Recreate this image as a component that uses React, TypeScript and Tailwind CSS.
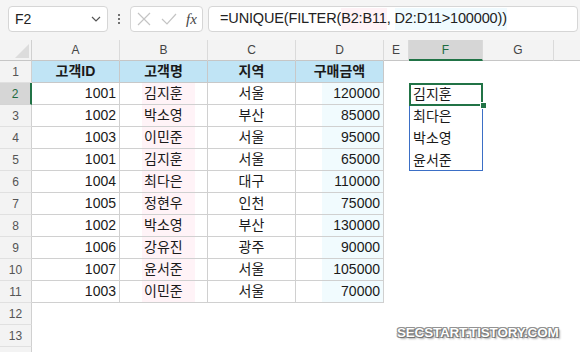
import React from 'react';

const font = { fontFamily: '"Liberation Sans", "Noto Sans CJK KR", sans-serif' };

const rows: Array<[string, string, string, string]> = [
  ['1001', '김지훈', '서울', '120000'],
  ['1002', '박소영', '부산', '85000'],
  ['1003', '이민준', '서울', '95000'],
  ['1001', '김지훈', '서울', '65000'],
  ['1004', '최다은', '대구', '110000'],
  ['1005', '정현우', '인천', '75000'],
  ['1002', '박소영', '부산', '130000'],
  ['1006', '강유진', '광주', '90000'],
  ['1007', '윤서준', '서울', '105000'],
  ['1003', '이민준', '서울', '70000'],
];

const spill = ['김지훈', '최다은', '박소영', '윤서준'];

function RowHeader({ n, selected }: { n: number; selected?: boolean }) {
  return (
    <div
      className={
        selected
          ? 'w-[32px] h-full flex items-center justify-center text-[12px] text-[#1e6b3f] bg-[#d6d6d6] border-r-2 border-r-[#217346] border-b border-b-[#d4d4d4]'
          : 'w-[32px] h-full flex items-center justify-center text-[12px] text-[#555] bg-[#f3f3f3] border-r border-r-[#d0d0d0] border-b border-b-[#e0e0e0]'
      }
    >
      {n}
    </div>
  );
}

function XIcon() {
  return (
    <svg width="14" height="14" viewBox="0 0 14 14" fill="none" stroke="#c4c4c4" strokeWidth="1.2">
      <path d="M1 1 L13 13 M13 1 L1 13" />
    </svg>
  );
}

function CheckIcon() {
  return (
    <svg width="16" height="14" viewBox="0 0 16 14" fill="none" stroke="#c4c4c4" strokeWidth="1.2">
      <path d="M1 7 L6 12 L15 2" />
    </svg>
  );
}

export default function App() {
  return (
    <div className="w-[580px] h-[352px] bg-white relative overflow-hidden text-[#1a1a1a]" style={font}>
      {/* formula bar */}
      <div className="h-[40px] bg-[#f5f5f5] flex items-start pt-[6px] pl-[8px]">
        <div className="w-[100px] h-[26px] bg-white border border-[#d6d6d6] rounded-[4px] flex items-center justify-between pl-[6px] pr-[6px]">
          <span className="text-[14px] text-[#222]">F2</span>
          <svg width="10" height="6" viewBox="0 0 10 6" fill="none" stroke="#555" strokeWidth="1.2">
            <path d="M1 1 L5 5 L9 1" />
          </svg>
        </div>
        <div className="w-[22px] h-[26px] flex flex-col items-center justify-center gap-[2px]">
          <span className="w-[2px] h-[2px] bg-[#444] rounded-full" />
          <span className="w-[2px] h-[2px] bg-[#444] rounded-full" />
          <span className="w-[2px] h-[2px] bg-[#444] rounded-full" />
        </div>
        <div className="w-[73px] h-[26px] bg-white border border-[#d6d6d6] rounded-[4px] flex items-center pl-[6px] gap-[10px]">
          <XIcon />
          <CheckIcon />
          <span className="text-[15px] italic text-[#444] -ml-[1px]" style={{ fontFamily: '"Liberation Serif", serif' }}>
            fx
          </span>
        </div>
        <div className="ml-[5px] w-[370px] h-[26px] bg-white border border-[#d6d6d6] rounded-[4px] flex items-center pl-[11px] text-[14.5px] tracking-[-0.15px] text-[#222]">
          <span>=UNIQUE(FILTER(</span>
          <span className="bg-[#fff2f6]">B2:B11</span>
          <span>,&nbsp;</span>
          <span className="bg-[#f0fbff]">D2:D11&gt;100000))</span>
        </div>
      </div>

      {/* column headers */}
      <div className="h-[21px] flex bg-[#f3f3f3] text-[12px] text-[#444]">
        <div className="w-[32px] h-full border-r border-r-[#d0d0d0] border-b border-b-[#c6c6c6] flex items-end justify-end p-[2px]">
          <svg width="14" height="14" viewBox="0 0 14 14">
            <path d="M14 0 L14 14 L0 14 Z" fill="#dcdcdc" />
          </svg>
        </div>
        <div className="w-[88px] border-r border-[#dadada] border-b border-b-[#c6c6c6] flex items-center justify-center">A</div>
        <div className="w-[88px] border-r border-[#dadada] border-b border-b-[#c6c6c6] flex items-center justify-center">B</div>
        <div className="w-[88px] border-r border-[#dadada] border-b border-b-[#c6c6c6] flex items-center justify-center">C</div>
        <div className="w-[88px] border-r border-[#dadada] border-b border-b-[#c6c6c6] flex items-center justify-center">D</div>
        <div className="w-[25px] border-r border-[#dadada] border-b border-b-[#c6c6c6] flex items-center justify-center">E</div>
        <div className="w-[74px] bg-[#d6d6d6] border-r border-[#dadada] border-b-2 border-b-[#217346] flex items-center justify-center text-[#1e6b3f]">F</div>
        <div className="w-[71px] border-r border-[#dadada] border-b border-b-[#c6c6c6] flex items-center justify-center">G</div>
        <div className="flex-1 border-b border-b-[#c6c6c6]" />
      </div>

      {/* row 1: table header */}
      <div className="h-[22px] flex text-[14px]">
        <RowHeader n={1} />
        {['고객ID', '고객명', '지역', '구매금액'].map((h) => (
          <div key={h} className="w-[88px] bg-[#c0e4f5] border-r border-b border-[#c8c8c8] flex items-center justify-center font-bold">
            {h}
          </div>
        ))}
      </div>

      {/* data rows */}
      {rows.map((r, i) => {
        const n = i + 2;
        const sp = spill[i];
        return (
          <div key={n} className="h-[22px] flex text-[14px]">
            <RowHeader n={n} selected={n === 2} />
            <div className="w-[88px] border-r border-b border-[#d0d0d0] flex items-center justify-end pr-[3px]">{r[0]}</div>
            <div className="w-[88px] border-r border-b border-[#d0d0d0] flex items-center pl-[22px]">
              <span className="bg-[#fff3f7] px-[2px] w-[53px] h-full flex items-center">{r[1]}</span>
            </div>
            <div className="w-[88px] border-r border-b border-[#d0d0d0] flex items-center justify-center">{r[2]}</div>
            <div className="w-[88px] border-r border-b border-[#d0d0d0] flex items-center justify-end">
              <span className="bg-[#f1fbfe] w-[61px] h-full flex items-center justify-end pr-[3px]">{r[3]}</span>
            </div>
            <div className="w-[25px]" />
            <div className="w-[74px] flex items-center pl-[4px]">{sp ?? ''}</div>
          </div>
        );
      })}

      {/* rows 12-13 */}
      {[12, 13].map((n) => (
        <div key={n} className="h-[22px] flex">
          <RowHeader n={n} />
        </div>
      ))}
      <div className="h-[5px] flex">
        <div className="w-[32px] h-full bg-[#f3f3f3] border-r border-r-[#d0d0d0]" />
      </div>

      {/* spill range outline F2:F5 */}
      <div className="absolute left-[409px] top-[83px] w-[74px] h-[88px] border border-[#3b6fc6] pointer-events-none" />
      {/* active cell F2 */}
      <div className="absolute left-[409px] top-[83px] w-[74px] h-[23px] border-2 border-[#217346] pointer-events-none" />
      <div className="absolute left-[480px] top-[102px] w-[5px] h-[5px] bg-[#217346] border border-white box-content" />

      {/* watermark */}
      <div
        className="absolute left-[397px] top-[323px] text-[13.5px] font-bold text-white tracking-[-0.2px]"
        style={{ fontFamily: '"Liberation Sans", sans-serif', textShadow: '0 0 1px #555, 1px 1px 0 #777, -1px -1px 0 #999, 1px -1px 0 #999, -1px 1px 0 #999, 2px 2px 2px #aaa' }}
      >
        SECSTART.TISTORY.COM
      </div>
    </div>
  );
}
